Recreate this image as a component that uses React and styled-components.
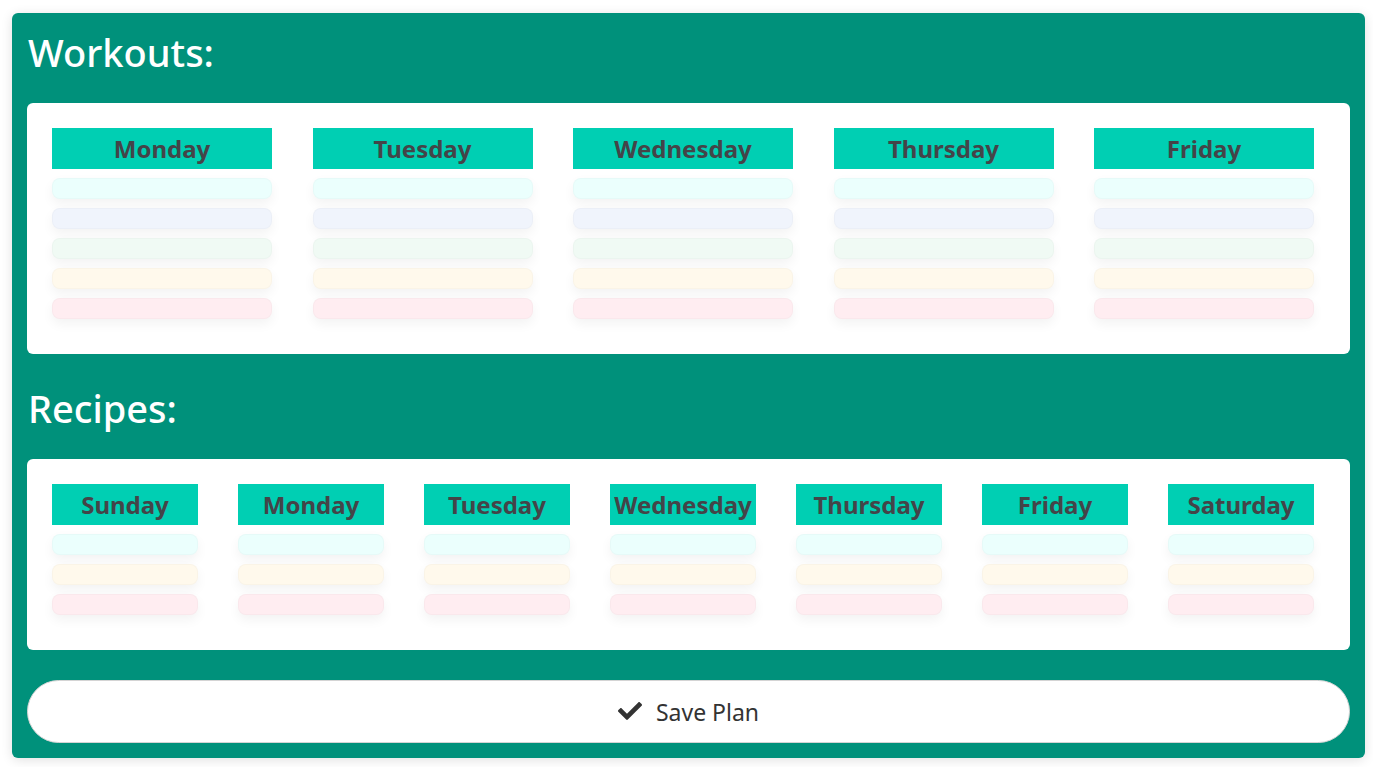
import React from 'react'
import styled, { createGlobalStyle } from 'styled-components'
import { FaCheck } from 'react-icons/fa'

const GlobalStyle = createGlobalStyle`
  body {
    margin: 0;
    background: #ffffff;
    font-family: 'Noto Sans', 'Open Sans', sans-serif;
  }
  * {
    box-sizing: border-box;
  }
`

const Page = styled.div`
  padding: 13px 8px 9px 12px;
`

const Planner = styled.div`
  background-color: #00917b;
  border-radius: 6px;
  padding: 0 15px 15px;
  box-shadow: 0 2px 12px rgba(0, 0, 0, 0.12);
`

const SectionTitle = styled.h2`
  margin: 0;
  padding: ${p => (p.first ? '20px' : '35px')} 0 32px 1px;
  font-size: 38px;
  line-height: 38px;
  font-weight: 500;
  color: #ffffff;
`

const Card = styled.div`
  background: #ffffff;
  border-radius: 6px;
  padding: 25px 25px ${p => p.bottom}px;
  display: grid;
  grid-template-columns: repeat(${p => p.cols}, ${p => p.colWidth}px);
  column-gap: ${p => p.gap}px;
`

const Column = styled.div`
  display: flex;
  flex-direction: column;
`

const DayHeader = styled.div`
  height: 41px;
  background: #00cfb3;
  color: #444448;
  font-size: 24px;
  font-weight: 700;
  display: flex;
  align-items: center;
  justify-content: center;
  white-space: nowrap;
`

const Slot = styled.div`
  height: 21px;
  margin-top: 9px;
  border-radius: 8px;
  background: ${p => p.tone};
  border: 1px solid rgba(0, 0, 0, 0.02);
  box-shadow: 0 5px 12px rgba(0, 0, 0, 0.05);
`

const SaveButton = styled.button`
  margin-top: 30px;
  width: 100%;
  height: 63px;
  border-radius: 32px;
  border: 1px solid #d4d4d4;
  background: #ffffff;
  color: #333333;
  font-family: 'Noto Sans', 'Open Sans', sans-serif;
  font-size: 23px;
  display: flex;
  align-items: center;
  justify-content: center;
  gap: 14px;
  cursor: pointer;
  svg {
    color: #333333;
    margin-top: -2px;
  }
`

const workoutTones = ['#ebfffd', '#f0f4fc', '#f0faf4', '#fff9ec', '#ffedf1']
const recipeTones = ['#ebfffd', '#fff9ec', '#ffedf1']

const workoutDays = ['Monday', 'Tuesday', 'Wednesday', 'Thursday', 'Friday']
const recipeDays = ['Sunday', 'Monday', 'Tuesday', 'Wednesday', 'Thursday', 'Friday', 'Saturday']

function App() {
  return (
    <Page>
      <GlobalStyle />
      <Planner>
        <SectionTitle first>Workouts:</SectionTitle>
        <Card cols={5} colWidth={220} gap={40.5} bottom={35}>
          {workoutDays.map(day => (
            <Column key={day}>
              <DayHeader>{day}</DayHeader>
              {workoutTones.map((tone, i) => (
                <Slot key={i} tone={tone} />
              ))}
            </Column>
          ))}
        </Card>
        <SectionTitle>Recipes:</SectionTitle>
        <Card cols={7} colWidth={146} gap={40} bottom={35}>
          {recipeDays.map(day => (
            <Column key={day}>
              <DayHeader>{day}</DayHeader>
              {recipeTones.map((tone, i) => (
                <Slot key={i} tone={tone} />
              ))}
            </Column>
          ))}
        </Card>
        <SaveButton>
          <FaCheck size={24} />
          Save Plan
        </SaveButton>
      </Planner>
    </Page>
  )
}

export default App
